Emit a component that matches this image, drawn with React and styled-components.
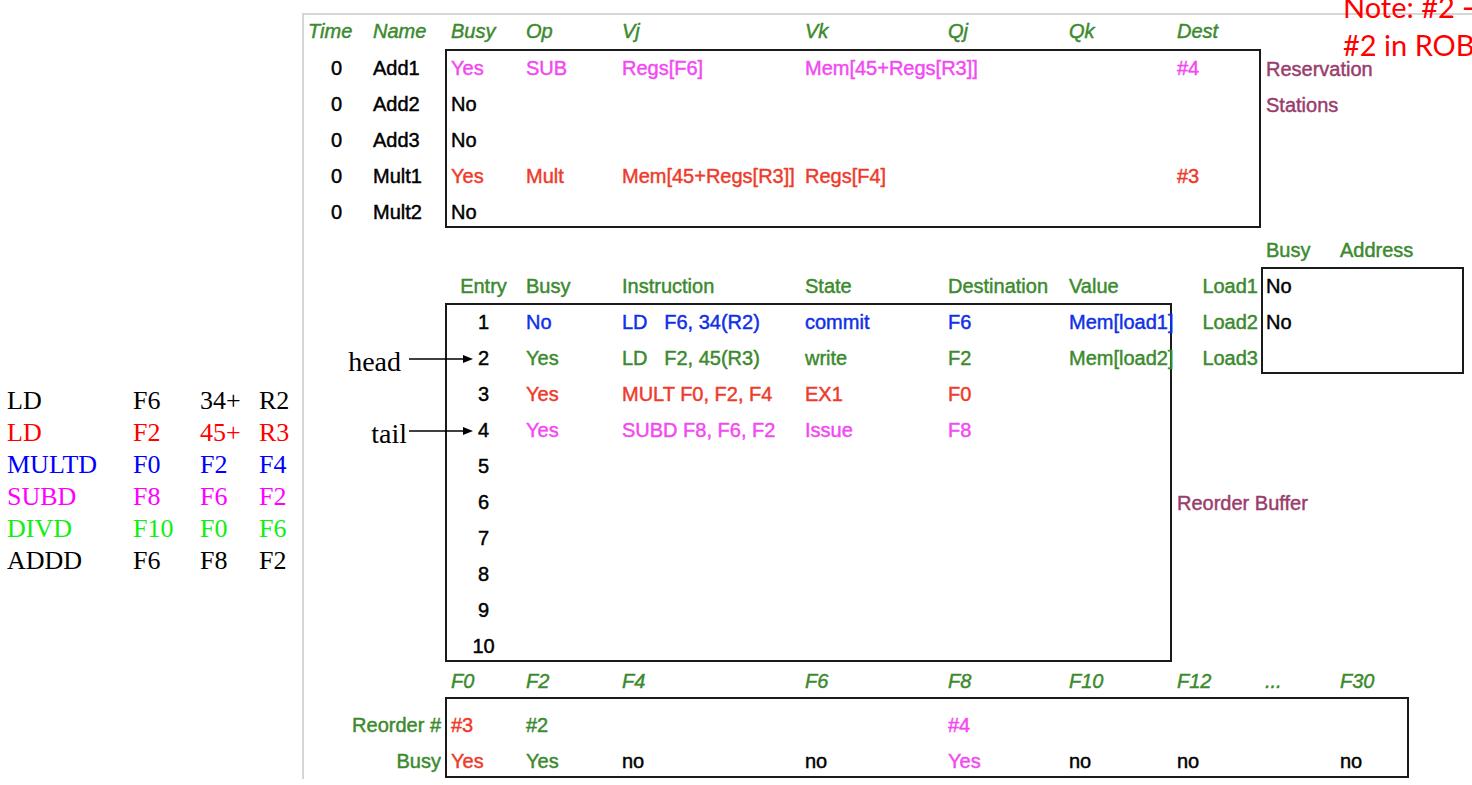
import React from 'react'
import styled, { createGlobalStyle } from 'styled-components'

const GREEN = '#3c8a2e'
const MAGENTA = '#f24af2'
const RED = '#ee3b2b'
const BLUE = '#1030e6'
const PLUM = '#993d6c'

// column widths shared by the three tables (from the boxes' inner left edge)
const COLS = [73, 96, 183, 143, 121, 108, 88, 76, 72]
const padOf = (i) => (i === 0 ? 4 : i === 8 ? 5 : 6)

const PROGRAM = [
  { c: '#000000', v: ['LD', 'F6', '34+', 'R2'] },
  { c: '#ff0000', v: ['LD', 'F2', '45+', 'R3'] },
  { c: '#0000ff', v: ['MULTD', 'F0', 'F2', 'F4'] },
  { c: '#ff00ff', v: ['SUBD', 'F8', 'F6', 'F2'] },
  { c: '#11ee11', v: ['DIVD', 'F10', 'F0', 'F6'] },
  { c: '#000000', v: ['ADDD', 'F6', 'F8', 'F2'] },
]

const RS_HEAD = ['Busy', 'Op', 'Vj', 'Vk', 'Qj', 'Qk', 'Dest']
const RS = [
  { name: 'Add1', c: MAGENTA, v: ['Yes', 'SUB', 'Regs[F6]', 'Mem[45+Regs[R3]]', '', '', '#4'], side: 'Reservation' },
  { name: 'Add2', v: ['No'], side: 'Stations' },
  { name: 'Add3', v: ['No'] },
  { name: 'Mult1', c: RED, v: ['Yes', 'Mult', 'Mem[45+Regs[R3]]', 'Regs[F4]', '', '', '#3'] },
  { name: 'Mult2', v: ['No'] },
]

const ROB_HEAD = ['Entry', 'Busy', 'Instruction', 'State', 'Destination', 'Value']
const ROB = [
  { c: BLUE, v: ['No', 'LD   F6, 34(R2)', 'commit', 'F6', 'Mem[load1]'] },
  { c: GREEN, v: ['Yes', 'LD   F2, 45(R3)', 'write', 'F2', 'Mem[load2]'] },
  { c: RED, v: ['Yes', 'MULT F0, F2, F4', 'EX1', 'F0'] },
  { c: MAGENTA, v: ['Yes', 'SUBD F8, F6, F2', 'Issue', 'F8'] },
  {}, {}, {}, {}, {}, {},
]

const LOADS = [
  { name: 'Load1', busy: 'No' },
  { name: 'Load2', busy: 'No' },
  { name: 'Load3', busy: '' },
]

const REG_HEAD = ['F0', 'F2', 'F4', 'F6', 'F8', 'F10', 'F12', '...', 'F30']
const REG_ROWS = [
  { label: 'Reorder #', v: [['#3', RED], ['#2', GREEN], null, null, ['#4', MAGENTA]] },
  {
    label: 'Busy',
    v: [['Yes', RED], ['Yes', GREEN], ['no'], ['no'], ['Yes', MAGENTA], ['no'], ['no'], null, ['no']],
  },
]

const GlobalStyle = createGlobalStyle`
  html, body {
    margin: 0;
    padding: 0;
    overflow: hidden;
    background: #fff;
  }
`

const Page = styled.div`
  position: relative;
  display: flex;
  width: 1472px;
  height: 785px;
  overflow: hidden;
  background: #fff;
  color: #000;
`

const Program = styled.div`
  flex: none;
  width: 302px;
  box-sizing: border-box;
  padding: 385px 0 0 7px;
  display: grid;
  grid-template-columns: 126px 67px 59px auto;
  grid-auto-rows: 32px;
  align-content: start;
  font-family: "Liberation Serif", "Times New Roman", serif;
  font-size: 26px;
  line-height: 32px;
`

const Word = styled.span`
  color: ${(p) => p.$c};
  white-space: nowrap;
`

const Frame = styled.div`
  flex: 1;
  margin-top: 13px;
  height: 764px;
  border-left: 2px solid #d6d6d6;
  border-top: 2px solid #d6d6d6;
  display: flex;
  flex-direction: column;
  font-family: "Liberation Sans", Arial, sans-serif;
  font-size: 20px;
  -webkit-text-stroke: 0.45px currentColor;
`

const HeadRow = styled.div`
  display: flex;
  align-items: center;
  height: ${(p) => p.$h || 36}px;
  padding-left: ${(p) => p.$indent || 0}px;
  color: ${GREEN};
  font-style: ${(p) => (p.$italic ? 'italic' : 'normal')};
`

const Line = styled.div`
  display: flex;
  align-items: center;
  justify-content: ${(p) => (p.$right ? 'flex-end' : 'flex-start')};
  height: 36px;
  padding-right: ${(p) => p.$padRight || 0}px;
  color: ${(p) => p.$c || 'inherit'};
`

const Cell = styled.div`
  flex: none;
  box-sizing: border-box;
  width: ${(p) => p.$w}px;
  padding-left: ${(p) => (p.$center ? 0 : p.$pad ?? 6)}px;
  text-align: ${(p) => (p.$center ? 'center' : 'left')};
  color: ${(p) => p.$c || 'inherit'};
  white-space: pre;
`

const Box = styled.div`
  flex: none;
  box-sizing: border-box;
  width: ${(p) => p.$w}px;
  height: ${(p) => p.$h}px;
  padding-top: ${(p) => p.$top || 0}px;
  border: 2px solid #1a1a1a;
`

const Body = styled.div`
  display: flex;
  align-items: flex-start;
`

const Stack = styled.div`
  flex: none;
  width: ${(p) => p.$w}px;
  padding-top: ${(p) => p.$top || 0}px;
  color: ${(p) => p.$c || 'inherit'};
`

const SideLabel = styled.div`
  padding-left: 5px;
  height: 36px;
  line-height: 36px;
  color: ${PLUM};
  white-space: nowrap;
`

/* middle band: reorder buffer + load buffers share one grid */
const Middle = styled.div`
  margin-top: 2px;
  display: grid;
  grid-template-columns: 141px 727px 89px 203px 1fr;
  grid-template-rows: repeat(12, 36px);
`

const LoadHeader = styled(HeadRow)`
  grid-column: 4 / 6;
  grid-row: 1;
`

const RobHeader = styled(HeadRow)`
  grid-column: 2;
  grid-row: 2;
  padding-left: 2px;
`

const LoadLabels = styled.div`
  grid-column: 3;
  grid-row: 2 / 5;
  color: ${GREEN};
`

const LoadBox = styled(Box)`
  grid-column: 4;
  grid-row: 2 / 5;
  margin-top: -2px;
  align-self: start;
`

const RobBox = styled(Box)`
  grid-column: 2;
  grid-row: 3 / 13;
  margin-top: -2px;
  align-self: start;
`

const BufferLabel = styled(SideLabel)`
  grid-column: 3 / 5;
  grid-row: 8;
`

const Pointer = styled.div`
  grid-column: 1;
  grid-row: ${(p) => p.$row};
  position: relative;
  z-index: 1;
  display: flex;
  align-items: center;
  justify-content: flex-end;
  margin-right: -28px;
`

const PointerLabel = styled.span`
  font-family: "Liberation Serif", "Times New Roman", serif;
  font-size: 28px;
  line-height: 28px;
  margin-top: 7px;
  margin-right: ${(p) => p.$gap}px;
  -webkit-text-stroke: 0;
`

const RegBox = styled(Box)`
  margin-top: -2px;
`

const Note = styled.div`
  position: absolute;
  left: 1343px;
  top: -12px;
  font-family: Lato, "Open Sans", sans-serif;
  font-size: 29px;
  line-height: 38px;
  color: #ff0000;
  white-space: nowrap;
`

const Arrow = () => (
  <svg width="64" height="10" viewBox="0 0 64 10">
    <line x1="0" y1="5" x2="56" y2="5" stroke="#000" strokeWidth="1.5" />
    <polygon points="54,1 64,5 54,9" fill="#000" />
  </svg>
)

const rowCells = (vals = [], color) =>
  vals.map((v, i) => (
    <Cell key={i} $w={COLS[i]} $pad={padOf(i)} $c={color}>
      {v}
    </Cell>
  ))

export default function App() {
  return (
    <Page>
      <GlobalStyle />

      <Program>
        {PROGRAM.map((row, r) =>
          row.v.map((w, i) => (
            <Word key={`${r}-${i}`} $c={row.c}>
              {w}
            </Word>
          ))
        )}
      </Program>

      <Frame>
        {/* reservation stations */}
        <HeadRow $h={35} $italic>
          <Cell $w={65} $pad={4}>Time</Cell>
          <Cell $w={76} $pad={4}>Name</Cell>
          {RS_HEAD.map((h, i) => (
            <Cell key={h} $w={i === 0 ? COLS[0] + 2 : COLS[i]} $pad={6}>
              {h}
            </Cell>
          ))}
        </HeadRow>
        <Body>
          <Stack $w={141} $top={2}>
            {RS.map((r) => (
              <Line key={r.name}>
                <Cell $w={65} $center>0</Cell>
                <Cell $w={76} $pad={4}>{r.name}</Cell>
              </Line>
            ))}
          </Stack>
          <Box $w={816} $h={179}>
            {RS.map((r) => (
              <Line key={r.name}>{rowCells(r.v, r.c)}</Line>
            ))}
          </Box>
          <Stack $w={200} $top={2}>
            {RS.filter((r) => r.side).map((r) => (
              <SideLabel key={r.side}>{r.side}</SideLabel>
            ))}
          </Stack>
        </Body>

        {/* reorder buffer and load buffers */}
        <Middle>
          <LoadHeader>
            <Cell $w={74} $pad={5}>Busy</Cell>
            <Cell $w={110} $pad={5}>Address</Cell>
          </LoadHeader>
          <RobHeader>
            {ROB_HEAD.map((h, i) => (
              <Cell key={h} $w={COLS[i]} $pad={padOf(i)} $center={i === 0}>
                {h}
              </Cell>
            ))}
          </RobHeader>
          <LoadLabels>
            {LOADS.map((l) => (
              <Line key={l.name} $right $padRight={3}>{l.name}</Line>
            ))}
          </LoadLabels>
          <LoadBox $w={203} $h={107}>
            {LOADS.map((l) => (
              <Line key={l.name}>
                <Cell $w={100} $pad={3}>{l.busy}</Cell>
              </Line>
            ))}
          </LoadBox>
          <RobBox $w={727} $h={359}>
            {ROB.map((r, i) => (
              <Line key={i}>
                <Cell $w={COLS[0]} $center>{i + 1}</Cell>
                {(r.v || []).map((v, j) => (
                  <Cell key={j} $w={COLS[j + 1]} $pad={6} $c={r.c}>
                    {v}
                  </Cell>
                ))}
              </Line>
            ))}
          </RobBox>
          <BufferLabel>Reorder Buffer</BufferLabel>
          <Pointer $row={4}>
            <PointerLabel $gap={8}>head</PointerLabel>
            <Arrow />
          </Pointer>
          <Pointer $row={6}>
            <PointerLabel $gap={2}>tail</PointerLabel>
            <Arrow />
          </Pointer>
        </Middle>

        {/* register result status */}
        <HeadRow $italic $indent={143}>
          {REG_HEAD.map((h, i) => (
            <Cell key={h} $w={COLS[i]} $pad={padOf(i)}>
              {h}
            </Cell>
          ))}
        </HeadRow>
        <Body>
          <Stack $w={141} $top={8} $c={GREEN}>
            {REG_ROWS.map((r) => (
              <Line key={r.label} $right $padRight={4}>{r.label}</Line>
            ))}
          </Stack>
          <RegBox $w={964} $h={81} $top={8}>
            {REG_ROWS.map((r) => (
              <Line key={r.label}>
                {r.v.map((v, i) => (
                  <Cell key={i} $w={COLS[i]} $pad={padOf(i)} $c={v && v[1]}>
                    {v ? v[0] : ''}
                  </Cell>
                ))}
              </Line>
            ))}
          </RegBox>
        </Body>
      </Frame>

      <Note>
        Note: #2 → #3
        <br />
        #2 in ROB
      </Note>
    </Page>
  )
}
